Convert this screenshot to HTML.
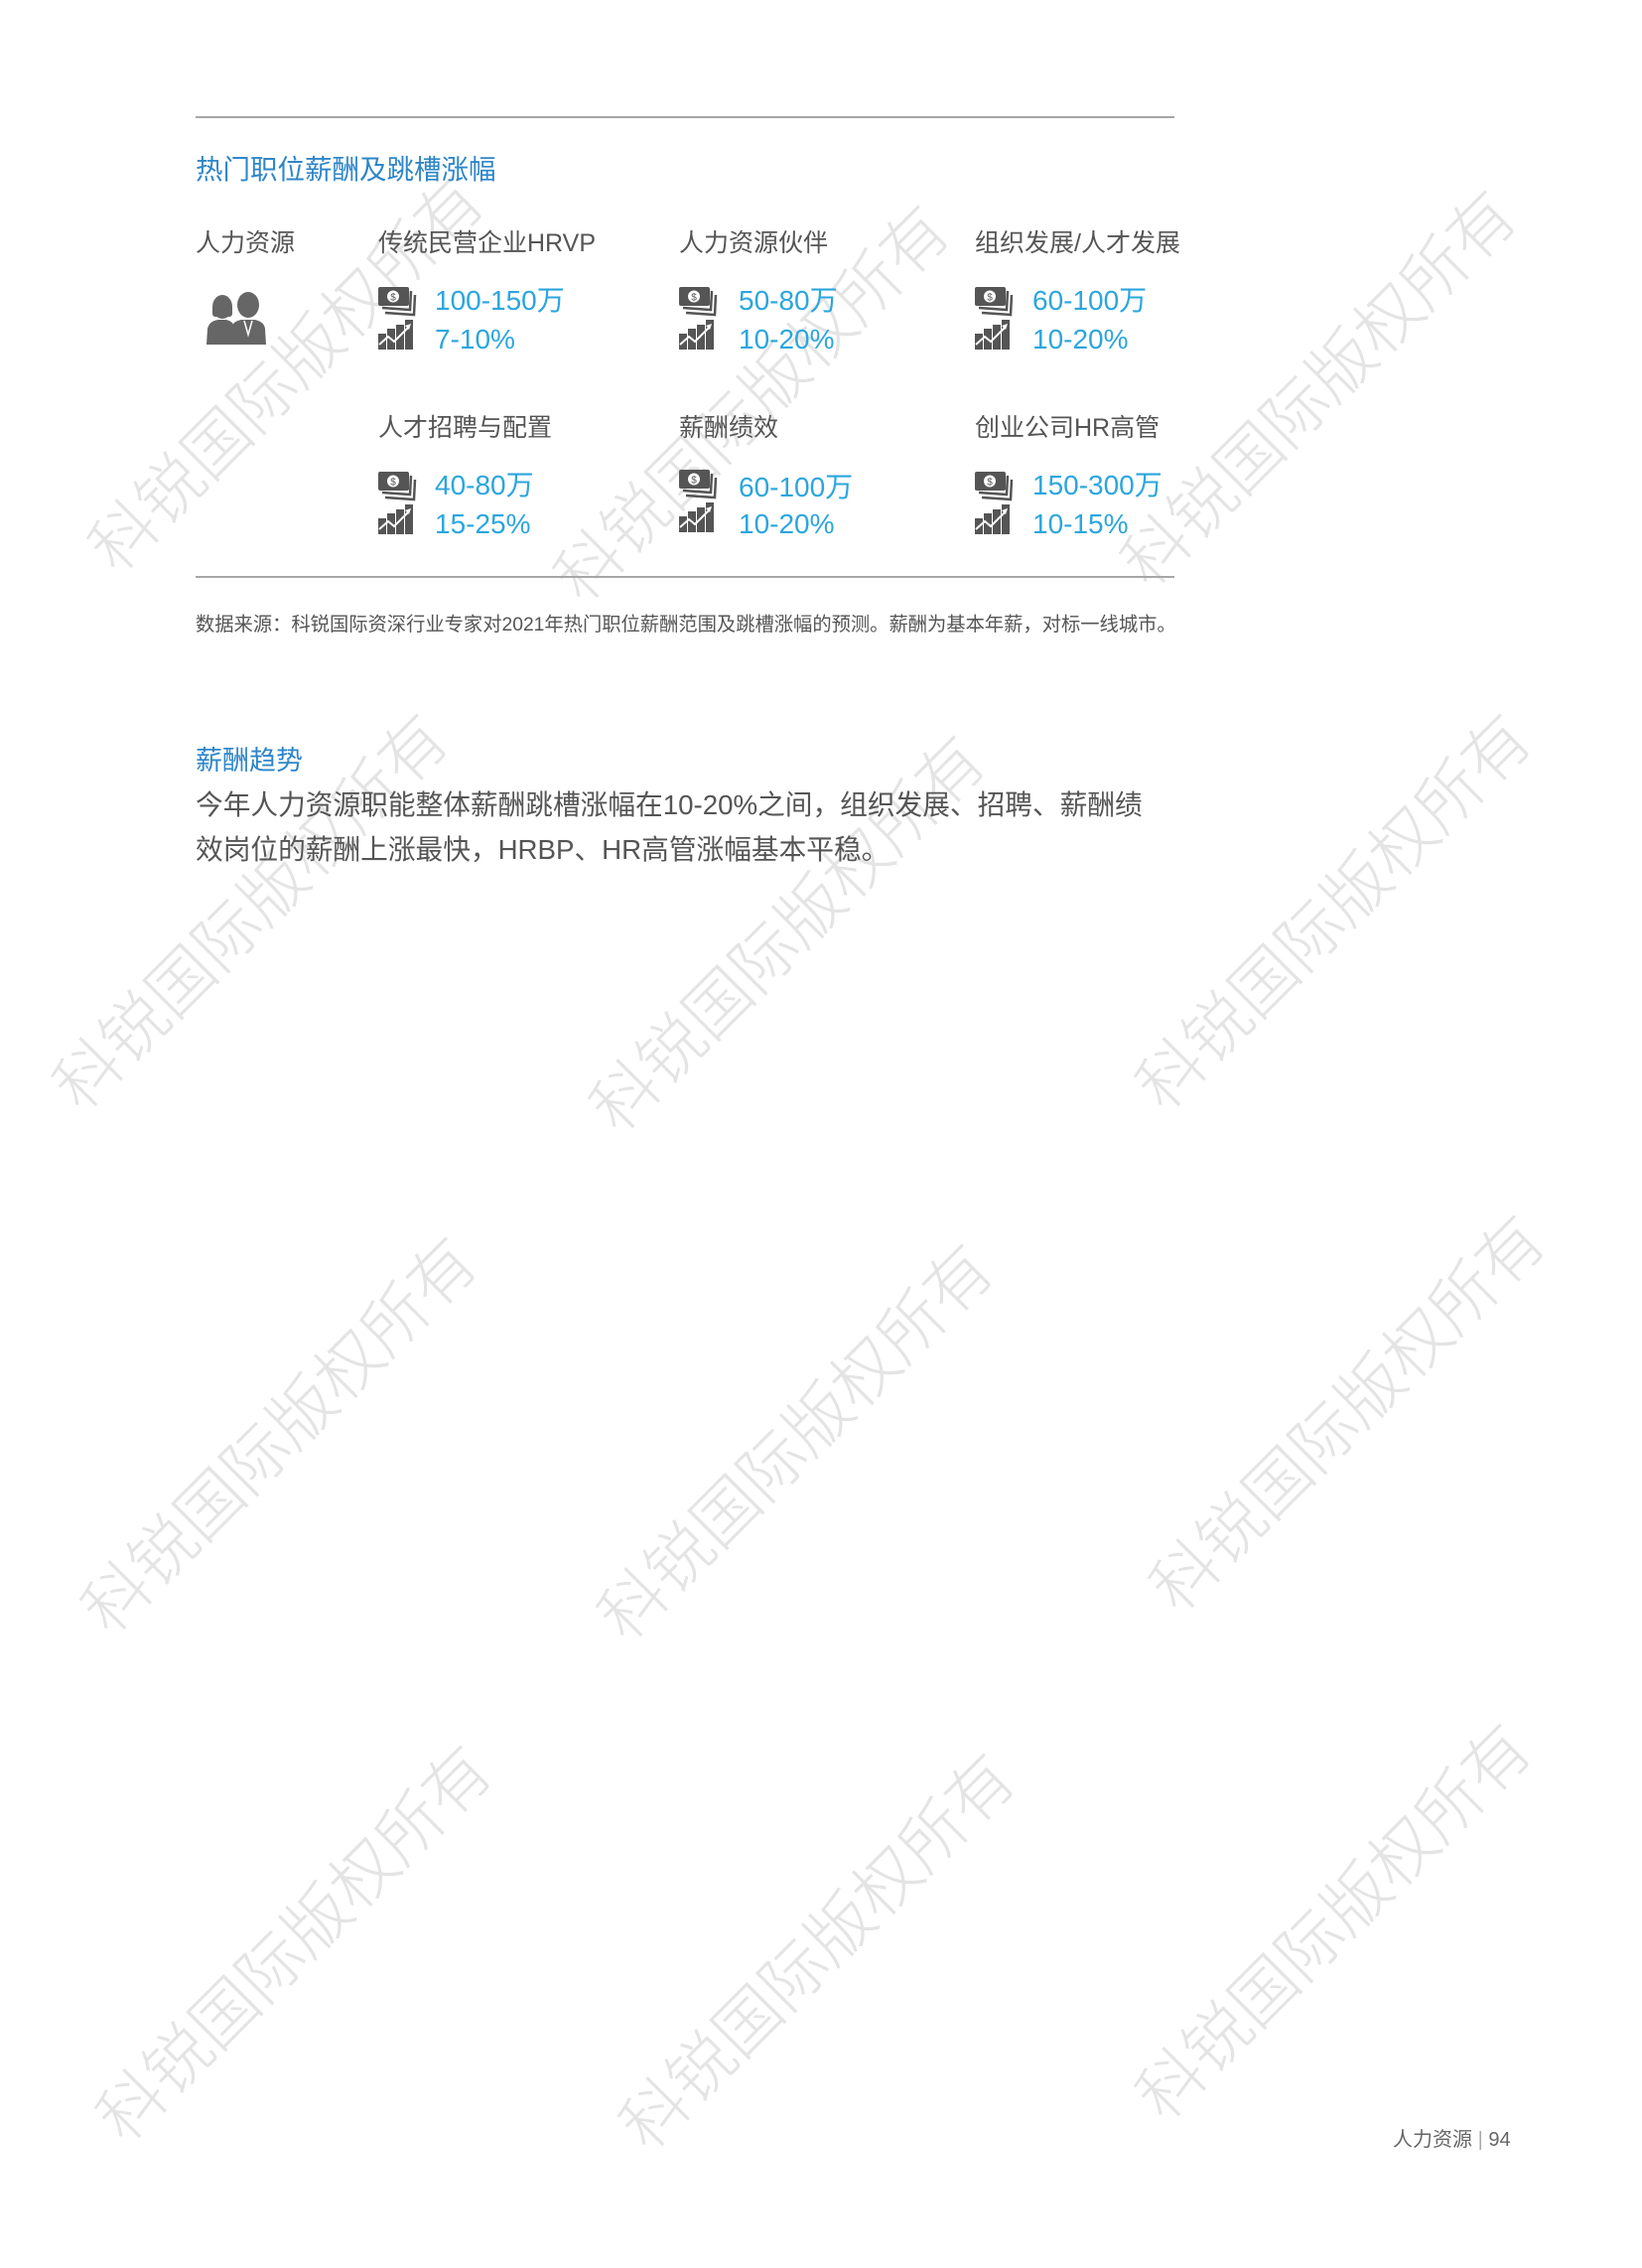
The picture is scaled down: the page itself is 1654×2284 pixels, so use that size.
<!DOCTYPE html>
<html><head><meta charset="utf-8">
<style>
*{margin:0;padding:0;box-sizing:border-box}
body{width:1654px;height:2284px;background:#fff;position:relative;overflow:hidden;font-family:"Liberation Sans","Noto Sans CJK SC",sans-serif;}
.a{position:absolute;white-space:nowrap;line-height:1}
.wm{position:absolute;font-size:66px;color:#e4e4e4;font-family:"Noto Sans CJK SC",sans-serif;font-weight:300;transform:translate(-50%,-50%) rotate(-45deg);white-space:nowrap;line-height:1;z-index:0}
.hr{position:absolute;left:197px;width:986px;height:2px;background:#a6a6a6}
.lbl{font-size:25px;color:#555}
.v{font-size:28px;color:#2ba6de}
.ic{position:absolute}
</style></head><body>
<div class="wm" style="left:285px;top:373px">科锐国际版权所有</div>
<div class="wm" style="left:754px;top:403px">科锐国际版权所有</div>
<div class="wm" style="left:1325px;top:388px">科锐国际版权所有</div>
<div class="wm" style="left:249px;top:915px">科锐国际版权所有</div>
<div class="wm" style="left:790px;top:937px">科锐国际版权所有</div>
<div class="wm" style="left:1340px;top:915px">科锐国际版权所有</div>
<div class="wm" style="left:278px;top:1442px">科锐国际版权所有</div>
<div class="wm" style="left:798px;top:1449px">科锐国际版权所有</div>
<div class="wm" style="left:1354px;top:1420px">科锐国际版权所有</div>
<div class="wm" style="left:293px;top:1954px">科锐国际版权所有</div>
<div class="wm" style="left:820px;top:1962px">科锐国际版权所有</div>
<div class="wm" style="left:1340px;top:1932px">科锐国际版权所有</div>

<div class="hr" style="top:117px"></div>
<div class="a" style="left:197px;top:157px;font-size:27.5px;color:#2e86c8">热门职位薪酬及跳槽涨幅</div>

<div class="a lbl" style="left:197px;top:233px">人力资源</div>
<div class="a lbl" style="left:381px;top:233px">传统民营企业HRVP</div>
<div class="a lbl" style="left:684px;top:233px">人力资源伙伴</div>
<div class="a lbl" style="left:982px;top:233px">组织发展/人才发展</div>

<svg class="ic" style="left:206px;top:293px" width="66" height="55" viewBox="0 0 66 55" fill="#666">
<ellipse cx="18" cy="16" rx="10" ry="12"/><rect x="8" y="14" width="20" height="12" rx="3"/>
<path d="M2 54 L3 38 Q5 30 14 29 L22 29 Q28 30 30 36 L30 54Z"/>
<ellipse cx="44" cy="14" rx="11" ry="13"/>
<path d="M26 54 L27 36 Q30 30 37 29 L51 29 Q60 31 61 38 L62 54Z"/>
<path d="M40 30 L44 44 L48 30" stroke="#fff" stroke-width="1.5" fill="none"/>
</svg>

<svg width="0" height="0" style="position:absolute">
<defs>
<g id="m"><rect x="0" y="1" width="31" height="19" rx="2" fill="#555"/><circle cx="15" cy="10.5" r="6" fill="#fff"/><text x="15" y="14.5" font-size="10" text-anchor="middle" fill="#555" font-family="Liberation Sans">$</text><path d="M4 22 L32 24 L33 5 M7 27 L36 29 L37 9" stroke="#555" stroke-width="2.5" fill="none"/></g>
<g id="c" fill="#555"><rect x="0" y="14" width="8" height="16"/><rect x="9" y="9" width="8" height="21"/><rect x="18" y="5" width="8" height="25"/><rect x="27" y="0" width="8" height="30"/><path d="M1 25 L10 17 L16 22 L30 8" stroke="#fff" stroke-width="2" fill="none"/><path d="M27 6 L33 4 L31 10Z" fill="#fff"/></g>
</defs></svg>

<svg class="ic" style="left:381px;top:288px" width="40" height="32"><use href="#m"/></svg>
<svg class="ic" style="left:381px;top:322px" width="36" height="30"><use href="#c"/></svg>
<div class="a v" style="left:438px;top:289px">100-150万</div>
<div class="a v" style="left:438px;top:328px">7-10%</div>

<svg class="ic" style="left:684px;top:288px" width="40" height="32"><use href="#m"/></svg>
<svg class="ic" style="left:684px;top:322px" width="36" height="30"><use href="#c"/></svg>
<div class="a v" style="left:744px;top:289px">50-80万</div>
<div class="a v" style="left:744px;top:328px">10-20%</div>

<svg class="ic" style="left:982px;top:288px" width="40" height="32"><use href="#m"/></svg>
<svg class="ic" style="left:982px;top:322px" width="36" height="30"><use href="#c"/></svg>
<div class="a v" style="left:1040px;top:289px">60-100万</div>
<div class="a v" style="left:1040px;top:328px">10-20%</div>

<div class="a lbl" style="left:381px;top:419px">人才招聘与配置</div>
<div class="a lbl" style="left:684px;top:419px">薪酬绩效</div>
<div class="a lbl" style="left:982px;top:419px">创业公司HR高管</div>

<svg class="ic" style="left:381px;top:474px" width="40" height="32"><use href="#m"/></svg>
<svg class="ic" style="left:381px;top:508px" width="36" height="30"><use href="#c"/></svg>
<div class="a v" style="left:438px;top:475px">40-80万</div>
<div class="a v" style="left:438px;top:514px">15-25%</div>

<svg class="ic" style="left:684px;top:472px" width="40" height="32"><use href="#m"/></svg>
<svg class="ic" style="left:684px;top:506px" width="36" height="30"><use href="#c"/></svg>
<div class="a v" style="left:744px;top:477px">60-100万</div>
<div class="a v" style="left:744px;top:514px">10-20%</div>

<svg class="ic" style="left:982px;top:474px" width="40" height="32"><use href="#m"/></svg>
<svg class="ic" style="left:982px;top:508px" width="36" height="30"><use href="#c"/></svg>
<div class="a v" style="left:1040px;top:475px">150-300万</div>
<div class="a v" style="left:1040px;top:514px">10-15%</div>

<div class="hr" style="top:580px"></div>
<div class="a" style="left:197px;top:620px;font-size:19.3px;color:#555">数据来源：科锐国际资深行业专家对2021年热门职位薪酬范围及跳槽涨幅的预测。薪酬为基本年薪，对标一线城市。</div>

<div class="a" style="left:197px;top:753px;font-size:27px;color:#2e86c8">薪酬趋势</div>
<div class="a" style="left:197px;top:797px;font-size:27.7px;color:#555">今年人力资源职能整体薪酬跳槽涨幅在10-20%之间，组织发展、招聘、薪酬绩</div>
<div class="a" style="left:197px;top:842px;font-size:27.7px;color:#555">效岗位的薪酬上涨最快，HRBP、HR高管涨幅基本平稳。</div>

<div class="a" style="left:1403px;top:2145px;font-size:20px;color:#666">人力资源 <span style="color:#aaa">|</span> 94</div>
</body></html>
